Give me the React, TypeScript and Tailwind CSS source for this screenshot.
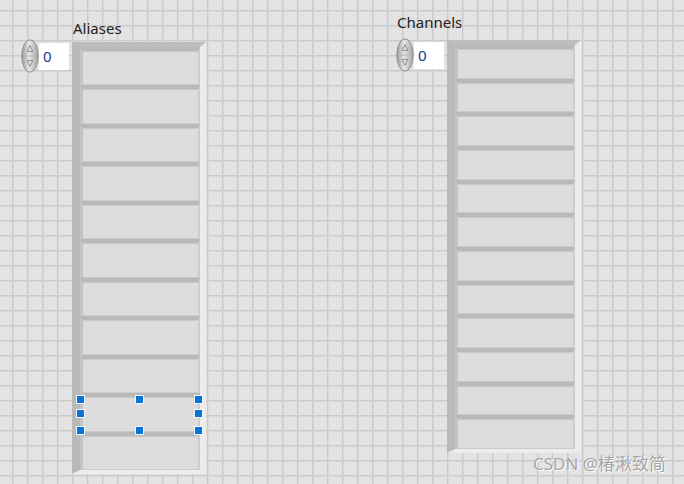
const panelBg =
  "bg-[#e3e3e3] bg-[linear-gradient(to_right,#cacaca_1px,#d8d8d8_1px,#d8d8d8_2px,transparent_2px),linear-gradient(to_bottom,#cacaca_1px,#d8d8d8_1px,#d8d8d8_2px,transparent_2px)] bg-[size:15px_15px] bg-[position:12px_10px]";

function Spinner() {
  return (
    <svg width="18" height="34" viewBox="0 0 18 34">
      <defs>
        <linearGradient id="spin" x1="0" x2="1" y1="0" y2="0">
          <stop offset="0" stopColor="#9c9c9c" />
          <stop offset="0.45" stopColor="#e6e6e6" />
          <stop offset="1" stopColor="#a4a4a4" />
        </linearGradient>
      </defs>
      <ellipse cx="9" cy="17" rx="8.2" ry="16.2" fill="url(#spin)" stroke="#8e8e8e" strokeWidth="1" />
      <path d="M9 6.5 L6.2 12.5 L11.8 12.5 Z" fill="none" stroke="#8a8a8a" strokeWidth="0.9" />
      <line x1="4" y1="17" x2="14" y2="17" stroke="#b0b0b0" strokeWidth="0.8" />
      <path d="M9 27.5 L6.2 21.5 L11.8 21.5 Z" fill="none" stroke="#8a8a8a" strokeWidth="0.9" />
    </svg>
  );
}

function IndexControl() {
  return (
    <div className="flex items-center">
      <Spinner />
      <div className="w-[30px] h-[27px] bg-white flex items-center pl-[4px] text-[15px] text-[#1b3c8c] leading-none">
        0
      </div>
    </div>
  );
}

function Handle({ x, y }: { x: number; y: number }) {
  return (
    <div
      className="absolute w-[9px] h-[9px] bg-[#0a74d6] border border-[#f4f8fc]"
      style={{ left: x - 4.5, top: y - 4.5 }}
    />
  );
}

interface ArrayProps {
  label: string;
  count: number;
  height: number;
  labelH: number;
  labelX: number;
  frameTop: number;
  selected?: boolean;
}

function ArrayControl({ label, count, height, labelH, labelX, frameTop, selected }: ArrayProps) {
  return (
    <div className="flex flex-col">
      <div className="text-[15px] text-[#222] leading-none" style={{ height: labelH, marginLeft: labelX }}>
        {label}
      </div>
      <div className="flex items-start gap-[3px]">
        <IndexControl />
        <div
          className="relative w-[134px] flex flex-col bg-[#c4c4c4] border-t-[5px] border-l-[8px] border-r-[6px] border-b-[4px] border-t-[#bdbdbd] border-l-[#b9b9b9] border-r-[#ececec] border-b-[#ececec]"
          style={{ height, marginTop: frameTop }}
        >
          {Array.from({ length: count }).map((_, i) => (
            <div
              key={i}
              className="flex-1 bg-[#dddddd] border-t-[4px] border-l-[3px] border-r-[2px] border-b border-t-[#b9b9b9] border-l-[#c4c4c4] border-r-[#cdcdcd] border-b-[#cacaca] shadow-[inset_0_1px_1px_#c8c8c8]"
            />
          ))}
          {selected && (
            <>
              <Handle x={0} y={352} />
              <Handle x={59} y={352} />
              <Handle x={118} y={352} />
              <Handle x={0} y={366} />
              <Handle x={118} y={366} />
              <Handle x={0} y={383} />
              <Handle x={59} y={383} />
              <Handle x={118} y={383} />
            </>
          )}
        </div>
      </div>
    </div>
  );
}

export default function App() {
  return (
    <div className={`relative w-[684px] h-[484px] overflow-hidden ${panelBg} font-['Noto_Sans','Open_Sans',sans-serif]`}>
      {/* front panel controls */}
      <div className="absolute left-[21px] top-[21px]">
        <ArrayControl label="Aliases" count={11} height={432} labelH={18} labelX={52} frameTop={3} selected />
      </div>
      <div className="absolute left-[396px] top-[15px]">
        <ArrayControl label="Channels" count={12} height={413} labelH={23} labelX={1} frameTop={2} />
      </div>

      {/* watermark */}
      <div className="absolute left-[533px] top-[455px] text-[17px] text-[#a6a6a6] leading-none font-['Noto_Sans','Noto_Sans_CJK_SC',sans-serif] [text-shadow:1px_1px_0_#ffffff]">
        CSDN @椿湫致简
      </div>
    </div>
  );
}
